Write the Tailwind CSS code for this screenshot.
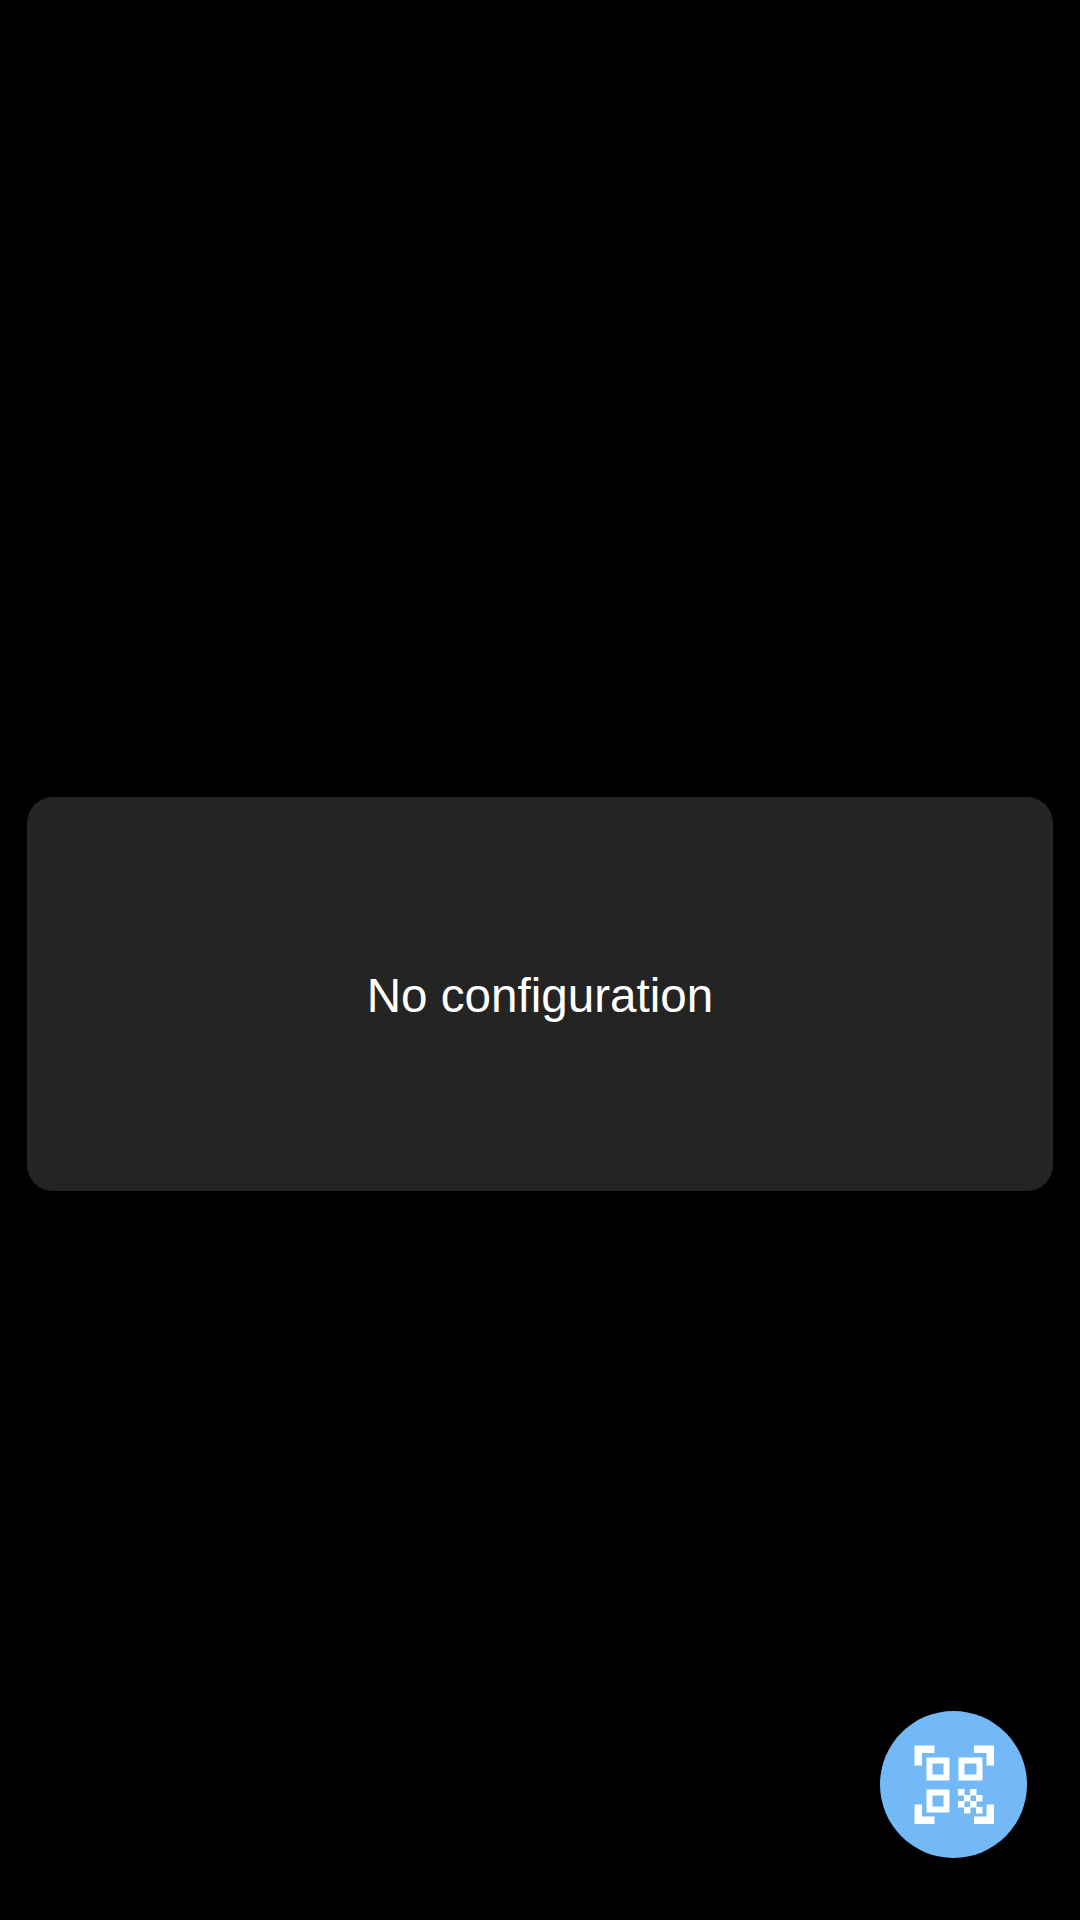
<!DOCTYPE html>
<html lang="en">
<head>
    <meta charset="UTF-8">
    <title>No configuration</title>
    <script src="https://cdn.jsdelivr.net/npm/@tailwindcss/browser@4"></script>
</head>
<body class="bg-black">
    <div class="relative h-[1920px] w-[1080px] pt-[797px] px-[27px] font-['Liberation_Sans',sans-serif]">
        <div class="flex h-[394px] items-center justify-center rounded-[26px] bg-[#242424] pt-[3px]">
            <span class="text-[47.6px] text-white">No configuration</span>
        </div>

        <!-- scan button -->
        <button class="absolute left-[880px] top-[1711px] flex h-[147px] w-[147px] items-center justify-center rounded-full bg-[#74b9f7]">
            <svg class="h-[100px] w-[100px]" viewBox="-1.5 -0.5 100 100" fill="#fff">
                <path d="M9 10h20v7.500H16.500V30H9zM88.500 10h-20v7.500h12.500V30h7.500zM9 88.500h20V81H16.500V69H9zM88.500 88.500h-20V81h12.500V69h7.500z"/>
                <path fill-rule="evenodd" d="M21 22h23v23H21zM27 28v11h11V28zM53 22h24v23H53zM59 28v11h12V28zM21 54h23v23H21zM27 60v11h11V60z"/>
                <path d="M52.500 53.500h6.500v6.500h-6.500zM64.500 53.500h6.500v6.500h-6.500zM58.500 59.500h6.500v6.500h-6.500zM70.500 59.500h6.500v6.500h-6.500zM52.500 65.500h6.500v6.500h-6.500zM64.500 65.500h6.500v6.500h-6.500zM58.500 71.500h6.500v6.500h-6.500zM70.500 71.500h6.500v6.500h-6.500z"/>
            </svg>
        </button>
    </div>
</body>
</html>
